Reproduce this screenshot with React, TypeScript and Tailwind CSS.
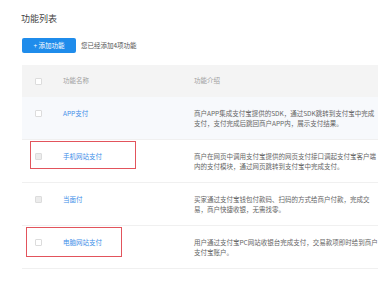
const ROWS = [
  {
    name: 'APP支付',
    desc: ['商户APP集成支付宝提供的SDK，通过SDK跳转到支付宝中完成', '支付，支付完成后跳回商户APP内，展示支付结果。'],
    disabled: false,
    tint: true,
    mark: null as null | string,
  },
  {
    name: '手机网站支付',
    desc: ['商户在网页中调用支付宝提供的网页支付接口调起支付宝客户端', '内的支付模块，通过网页跳转到支付宝中完成支付。'],
    disabled: true,
    tint: false,
    mark: 'left-[8px] top-[1px] w-[106px] h-[28px]',
  },
  {
    name: '当面付',
    desc: ['买家通过支付宝钱包付款码、扫码的方式给商户付款，完成交', '易，商户快捷收银，无需找零。'],
    disabled: true,
    tint: false,
    mark: null,
  },
  {
    name: '电脑网站支付',
    desc: ['用户通过支付宝PC网站收银台完成支付，交易款项即时给到商户', '支付宝账户。'],
    disabled: false,
    tint: false,
    mark: 'left-[4px] top-[1px] w-[96px] h-[30px]',
  },
]

function Checkbox({ disabled }: { disabled?: boolean }) {
  return (
    <div
      className={
        disabled
          ? 'w-[7px] h-[7px] rounded-[1px] border border-[#dcdcdc] bg-[#ececec]'
          : 'w-[7px] h-[7px] rounded-[1px] border border-[#dcdcdc] bg-white'
      }
    />
  )
}

export default function App() {
  return (
    <div
      className="w-[378px] h-[282px] bg-white overflow-hidden pt-[13px]"
      style={{ fontFamily: '"Noto Sans CJK SC", "Noto Sans", sans-serif' }}
    >
      <h2 className="pl-[21px] text-[9px] leading-[12px] text-[#444]">功能列表</h2>

      {/* Add button row */}
      <div className="flex items-center pl-[22px] mt-[13px]">
        <button className="w-[54px] h-[15px] rounded-[2px] bg-[#1f8ceb] text-white text-[6.5px] leading-[15px]">
          + 添加功能
        </button>
        <span className="ml-[5px] text-[6.5px] text-[#555]">您已经添加4项功能</span>
      </div>

      {/* Table */}
      <div className="ml-[22px] mt-[12px]">
        <div className="flex items-center h-[32px] bg-[#f4f4f4] text-[6.5px] text-[#a0a0a0]">
          <div className="w-[41px] pl-[13px]">
            <Checkbox />
          </div>
          <div className="w-[131px]">功能名称</div>
          <div>功能介绍</div>
        </div>

        {ROWS.map(r => (
          <div
            key={r.name}
            className={
              r.tint
                ? 'relative flex items-start h-[43px] pt-[11px] border-b border-[#f0f0f0] bg-[#f7f9fc]'
                : 'relative flex items-start h-[43px] pt-[11px] border-b border-[#f0f0f0] bg-white'
            }
          >
            <div className="w-[41px] pl-[13px] h-[10px] flex items-center">
              <Checkbox disabled={r.disabled} />
            </div>
            <div className="w-[131px] text-[6.5px] leading-[10px] text-[#3d8ee8]">{r.name}</div>
            <div className="text-[6.5px] leading-[10px] text-[#666] whitespace-nowrap">
              {r.desc[0]}
              <br />
              {r.desc[1]}
            </div>
            {r.mark && (
              <div className={`absolute ${r.mark} border-[1.5px] border-[#e2545c]`} />
            )}
          </div>
        ))}
      </div>
    </div>
  )
}
